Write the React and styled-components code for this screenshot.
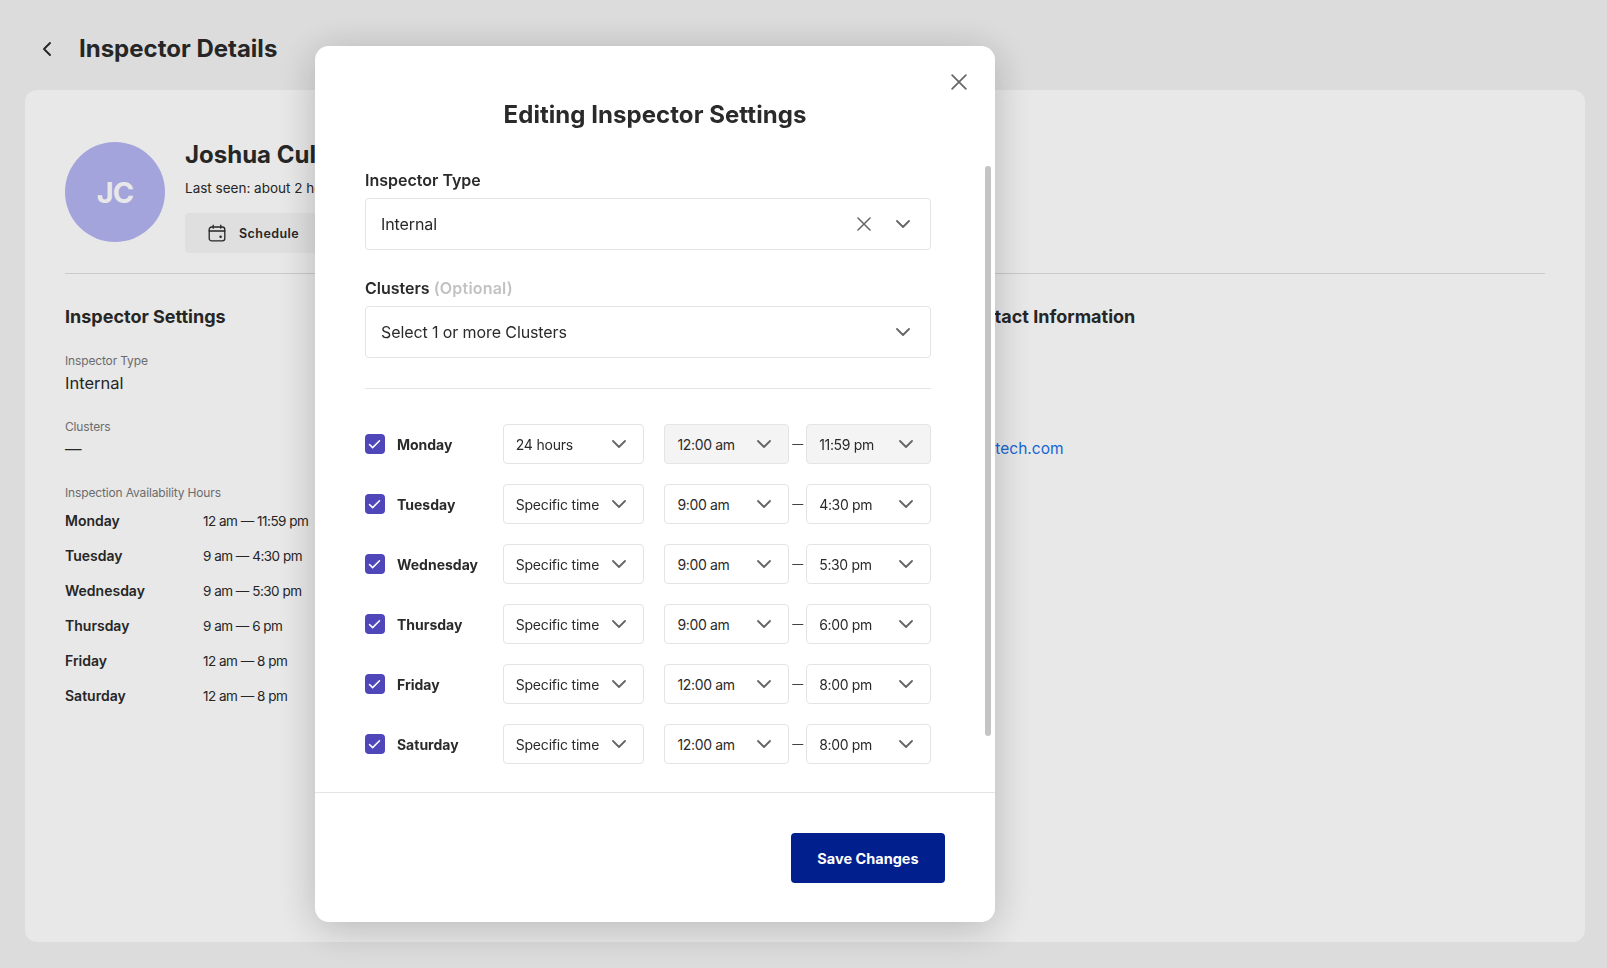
import React from "react";
import styled, { createGlobalStyle } from "styled-components";
import { Check } from "lucide-react";

const FONT = `"Inter", "Noto Sans", "Liberation Sans", sans-serif`;

const GlobalStyle = createGlobalStyle`
  * { box-sizing: border-box; }
  html, body { margin: 0; height: 100%; }
  body {
    font-family: ${FONT};
    color: #2a2a2a;
    background: #f2f2f2;
    overflow: hidden;
  }
`;

const availability = [
  { day: "Monday", hours: "12 am — 11:59 pm", mode: "24 hours", from: "12:00 am", to: "11:59 pm", locked: true },
  { day: "Tuesday", hours: "9 am — 4:30 pm", mode: "Specific time", from: "9:00 am", to: "4:30 pm" },
  { day: "Wednesday", hours: "9 am — 5:30 pm", mode: "Specific time", from: "9:00 am", to: "5:30 pm" },
  { day: "Thursday", hours: "9 am — 6 pm", mode: "Specific time", from: "9:00 am", to: "6:00 pm" },
  { day: "Friday", hours: "12 am — 8 pm", mode: "Specific time", from: "12:00 am", to: "8:00 pm" },
  { day: "Saturday", hours: "12 am — 8 pm", mode: "Specific time", from: "12:00 am", to: "8:00 pm" },
];

const Chevron = () => (
  <svg width="14" height="8" viewBox="0 0 14 8" fill="none" stroke="#666" strokeWidth="1.8" strokeLinecap="round" strokeLinejoin="round">
    <path d="M1 1l6 6 6-6" />
  </svg>
);

const BackArrow = () => (
  <svg width="12" height="16" viewBox="0 0 12 16" fill="none" stroke="#2a2a2a" strokeWidth="1.9" strokeLinecap="round" strokeLinejoin="round">
    <path d="M9 2L3 8l6 6" />
  </svg>
);

const Cross = ({ size = 14 }) => (
  <svg width={size} height={size} viewBox="0 0 14 14" fill="none" stroke="#666" strokeWidth="1.5" strokeLinecap="round">
    <path d="M1 1l12 12M13 1L1 13" />
  </svg>
);

const CalendarIcon = () => (
  <svg width="18" height="18" viewBox="0 0 18 18" fill="none" stroke="#2a2a2a" strokeWidth="1.3" strokeLinecap="round">
    <rect x="1.2" y="3" width="15.6" height="13.8" rx="2.4" />
    <path d="M1.2 7h15.6M5.2 1.2v3M12.8 1.2v3" />
    <circle cx="12.6" cy="12.8" r="0.6" fill="#2a2a2a" />
  </svg>
);

const Page = styled.div`
  height: 968px;
  padding: 0 22px 26px 25px;
  display: flex;
  flex-direction: column;
`;

const TopBar = styled.header`
  height: 90px;
  display: flex;
  align-items: center;
  gap: 26px;
  padding: 8px 0 0 16px;
`;

const PageTitle = styled.h1`
  margin: 0;
  font-size: 24px;
  line-height: 32px;
  font-weight: 700;
`;

const Card = styled.main`
  flex: 1;
  background: #fff;
  border-radius: 12px;
  padding: 52px 40px 0;
`;

const Profile = styled.section`
  display: flex;
  gap: 20px;
  height: 132px;
  border-bottom: 1px solid #dedede;
`;

const Avatar = styled.div`
  width: 100px;
  height: 100px;
  border-radius: 50%;
  background: #b5b5f3;
  color: #fff;
  display: flex;
  align-items: center;
  justify-content: center;
  font-size: 29px;
  font-weight: 700;
  letter-spacing: -1px;
`;

const ProfileInfo = styled.div``;

const Name = styled.div`
  font-size: 24px;
  line-height: 26px;
  font-weight: 700;
`;

const LastSeen = styled.div`
  font-size: 13.5px;
  line-height: 20px;
  margin-top: 10px;
  white-space: nowrap;
`;

const ScheduleButton = styled.button`
  margin-top: 15px;
  height: 40px;
  width: 150px;
  padding: 0 0 0 23px;
  border: 0;
  border-radius: 4px;
  background: #f6f6f6;
  color: #2a2a2a;
  font-family: inherit;
  font-size: 12.5px;
  font-weight: 600;
  letter-spacing: 0.45px;
  display: flex;
  align-items: center;
  gap: 13px;
`;

const Columns = styled.div`
  display: grid;
  grid-template-columns: 894px 1fr;
  padding-top: 31px;
`;

const SectionTitle = styled.h2`
  margin: 0;
  font-size: 18px;
  line-height: 24px;
  font-weight: 700;
`;

const FieldLabel = styled.div`
  font-size: 12px;
  line-height: 18px;
  color: #777;
  letter-spacing: -0.15px;
  margin-top: ${({ $gap }) => $gap}px;
`;

const FieldValue = styled.div`
  font-size: 16.5px;
  line-height: 24px;
  margin-top: 1px;
`;

const HoursGrid = styled.div`
  display: grid;
  grid-template-columns: 138px 1fr;
  grid-auto-rows: 35px;
  align-items: center;
  margin-top: 1px;
`;

const HoursDay = styled.div`
  font-size: 14px;
  font-weight: 600;
`;

const HoursValue = styled.div`
  font-size: 13.5px;
  letter-spacing: -0.5px;
  white-space: nowrap;
`;

const EmailLink = styled.a`
  display: block;
  margin-top: 108px;
  font-size: 15.5px;
  line-height: 24px;
  color: #1a6fe8;
`;

const Overlay = styled.div`
  position: fixed;
  inset: 0;
  background: rgba(0, 0, 0, 0.09);
  padding: 46px 0 0 315px;
`;

const Modal = styled.div`
  position: relative;
  width: 680px;
  height: 876px;
  background: #fff;
  border-radius: 14px;
  box-shadow: 0 6px 40px rgba(0, 0, 0, 0.22);
  display: flex;
  flex-direction: column;
`;

const CloseButton = styled.button`
  position: absolute;
  top: 28px;
  right: 28px;
  width: 16px;
  height: 16px;
  padding: 0;
  border: 0;
  background: none;
  display: flex;
`;

const ScrollThumb = styled.div`
  position: absolute;
  top: 120px;
  left: 670px;
  width: 6px;
  height: 570px;
  border-radius: 3px;
  background: #c4c4c4;
`;

const ModalTitle = styled.h2`
  margin: 53px 0 37px;
  text-align: center;
  font-size: 24px;
  line-height: 32px;
  font-weight: 700;
  letter-spacing: 0.05px;
`;

const ModalBody = styled.div`
  flex: 1;
  padding: 0 64px 0 50px;
`;

const Label = styled.label`
  display: block;
  font-size: 16px;
  line-height: 24px;
  font-weight: 600;
  margin-bottom: 6px;
  span { color: #c2c2c2; letter-spacing: 0.2px; }
`;

const BigSelect = styled.div`
  height: 52px;
  margin-bottom: 26px;
  padding: 0 20px 0 15px;
  border: 1px solid #e4e4e4;
  border-radius: 4px;
  display: flex;
  align-items: center;
  justify-content: space-between;
  font-size: 16px;
  letter-spacing: -0.1px;
`;

const SelectIcons = styled.div`
  display: flex;
  align-items: center;
  gap: 25px;
`;

const Divider = styled.hr`
  margin: 30px 0 35px;
  border: 0;
  border-top: 1px solid #e4e4e4;
`;

const Row = styled.div`
  display: flex;
  align-items: center;
  height: 40px;
  margin-bottom: 20px;
  &:last-child { margin-bottom: 0; }
`;

const CheckBox = styled.div`
  width: 20px;
  height: 20px;
  border-radius: 4px;
  background: #4f46ba;
  color: #fff;
  display: flex;
  align-items: center;
  justify-content: center;
  margin-right: 12px;
`;

const DayName = styled.div`
  width: 106px;
  font-size: 14px;
  font-weight: 700;
`;

const SmallSelect = styled.div`
  width: ${({ $width }) => $width}px;
  height: 40px;
  padding: 0 17px 0 12px;
  border: 1px solid #e4e4e4;
  border-radius: 4px;
  background: ${({ $locked }) => ($locked ? "#f4f4f4" : "#fff")};
  display: flex;
  align-items: center;
  justify-content: space-between;
  font-size: 14px;
  letter-spacing: ${({ $spacing }) => $spacing || -0.2}px;
  white-space: nowrap;
  margin-left: ${({ $offset }) => $offset || 0}px;
`;

const Dash = styled.div`
  width: 17px;
  text-align: center;
  font-size: 11px;
`;

const Footer = styled.footer`
  height: 130px;
  border-top: 1px solid #e4e4e4;
  padding: 40px 50px 0 0;
  display: flex;
  justify-content: flex-end;
  align-items: flex-start;
`;

const SaveButton = styled.button`
  width: 154px;
  height: 50px;
  border: 0;
  border-radius: 4px;
  background: #011f8d;
  color: #fff;
  font-family: inherit;
  font-size: 14.5px;
  font-weight: 700;
`;

const App = () => (
  <>
    <GlobalStyle />
    <Page>
      <TopBar>
        <BackArrow />
        <PageTitle>Inspector Details</PageTitle>
      </TopBar>
      <Card>
        <Profile>
          <Avatar>JC</Avatar>
          <ProfileInfo>
            <Name>Joshua Culp</Name>
            <LastSeen>Last seen: about 2 hours ago</LastSeen>
            <ScheduleButton>
              <CalendarIcon />
              Schedule
            </ScheduleButton>
          </ProfileInfo>
        </Profile>
        <Columns>
          <section>
            <SectionTitle>Inspector Settings</SectionTitle>
            <FieldLabel $gap={23}>Inspector Type</FieldLabel>
            <FieldValue>Internal</FieldValue>
            <FieldLabel $gap={23}>Clusters</FieldLabel>
            <FieldValue>—</FieldValue>
            <FieldLabel $gap={23}>Inspection Availability Hours</FieldLabel>
            <HoursGrid>
              {availability.map((item) => (
                <React.Fragment key={item.day}>
                  <HoursDay>{item.day}</HoursDay>
                  <HoursValue>{item.hours}</HoursValue>
                </React.Fragment>
              ))}
            </HoursGrid>
          </section>
          <section>
            <SectionTitle>Contact Information</SectionTitle>
            <EmailLink>jc@xtech.com</EmailLink>
          </section>
        </Columns>
      </Card>
    </Page>
    <Overlay>
      <Modal>
        <CloseButton>
          <Cross size={16} />
        </CloseButton>
        <ScrollThumb />
        <ModalTitle>Editing Inspector Settings</ModalTitle>
        <ModalBody>
          <Label>Inspector Type</Label>
          <BigSelect>
            Internal
            <SelectIcons>
              <Cross />
              <Chevron />
            </SelectIcons>
          </BigSelect>
          <Label>
            Clusters <span>(Optional)</span>
          </Label>
          <BigSelect>
            Select 1 or more Clusters
            <Chevron />
          </BigSelect>
          <Divider />
          {availability.map((item) => (
            <Row key={item.day}>
              <CheckBox>
                <Check size={15} strokeWidth={2.4} />
              </CheckBox>
              <DayName>{item.day}</DayName>
              <SmallSelect $width={142}>
                {item.mode}
                <Chevron />
              </SmallSelect>
              <SmallSelect $width={125} $offset={20} $spacing={-0.35} $locked={item.locked}>
                {item.from}
                <Chevron />
              </SmallSelect>
              <Dash>—</Dash>
              <SmallSelect $width={125} $spacing={-0.35} $locked={item.locked}>
                {item.to}
                <Chevron />
              </SmallSelect>
            </Row>
          ))}
        </ModalBody>
        <Footer>
          <SaveButton>Save Changes</SaveButton>
        </Footer>
      </Modal>
    </Overlay>
  </>
);

export default App;
